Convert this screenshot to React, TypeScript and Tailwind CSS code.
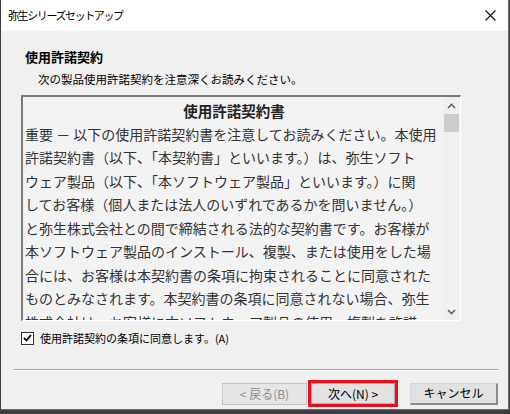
const jp = { fontFamily: '"Noto Sans CJK JP", "Noto Sans", sans-serif' }

const lines = [
  '重要 － 以下の使用許諾契約書を注意してお読みください。本使用',
  '許諾契約書（以下、「本契約書」といいます。）は、弥生ソフト',
  'ウェア製品（以下、「本ソフトウェア製品」といいます。）に関',
  'してお客様（個人または法人のいずれであるかを問いません。）',
  'と弥生株式会社との間で締結される法的な契約書です。お客様が',
  '本ソフトウェア製品のインストール、複製、または使用をした場',
  '合には、お客様は本契約書の条項に拘束されることに同意された',
  'ものとみなされます。本契約書の条項に同意されない場合、弥生',
  '株式会社は、お客様に本ソフトウェア製品の使用、複製を許諾',
]

function Chevron({ down }: { down?: boolean }) {
  return (
    <svg width="9" height="6" viewBox="0 0 9 6" className="block">
      <path
        d={down ? 'M1 1 L4.5 4.5 L8 1' : 'M1 5 L4.5 1.5 L8 5'}
        fill="none"
        stroke="#606060"
        strokeWidth="1.6"
      />
    </svg>
  )
}

export default function App() {
  return (
    <div className="flex h-[414px] w-[510px] flex-col overflow-hidden bg-[#3c3c3c]" style={jp}>
      <div className="ml-px mr-[1px] flex h-[410px] flex-col border-r border-b border-[#6e6e6e] bg-[#f0f0f0]">
        {/* title bar */}
        <div className="flex h-[31px] shrink-0 items-center justify-between bg-white pl-[7px] pr-[12px]">
          <span className="text-[11px] tracking-[-1.4px] text-black">弥生シリーズセットアップ</span>
          <svg width="11" height="11" viewBox="0 0 11 11">
            <path d="M0.5 0.5 L10.5 10.5 M10.5 0.5 L0.5 10.5" stroke="#111" strokeWidth="1.1" />
          </svg>
        </div>

        <div className="flex flex-1 flex-col">
          <div className="pl-[24px] pt-[17px] text-[13px] font-bold leading-[18px] text-black">使用許諾契約</div>
          <div className="pl-[37px] pt-[4px] text-[11.5px] leading-[18px] text-black">
            次の製品使用許諾契約を注意深くお読みください。
          </div>

          {/* license text box */}
          <div className="ml-[20px] mt-[7px] flex h-[226px] w-[440px] border-t-2 border-l-2 border-t-[#7a7a7a] border-l-[#7a7a7a] border-r border-b border-r-white border-b-white bg-[#f3f3f3]">
            <div className="flex-1 overflow-hidden pl-[2px] pt-[2px] text-[14px] leading-[23.5px] text-[#333]">
              <div className="text-center text-[14.5px] font-bold text-[#222]">使用許諾契約書</div>
              {lines.map((l, i) => (
                <div key={i} className="whitespace-nowrap">
                  {l}
                </div>
              ))}
            </div>
            <div className="flex w-[17px] shrink-0 flex-col items-center bg-[#f0f0f0]">
              <div className="flex h-[17px] items-center justify-center">
                <Chevron />
              </div>
              <div className="h-[18px] w-[15px] bg-[#cdcdcd]" />
              <div className="flex-1" />
              <div className="flex h-[17px] items-center justify-center">
                <Chevron down />
              </div>
            </div>
          </div>

          {/* checkbox */}
          <div className="mt-[9px] flex h-[16px] items-center pl-[20px]">
            <div className="flex h-[13px] w-[13px] items-center justify-center border border-[#333] bg-white">
              <svg width="9" height="8" viewBox="0 0 9 8">
                <path d="M1 4 L3.5 6.5 L8 1" fill="none" stroke="#000" strokeWidth="1.8" />
              </svg>
            </div>
            <span className="ml-[6px] text-[11px] leading-[16px] text-black">使用許諾契約の条項に同意します。(A)</span>
          </div>

          {/* separator */}
          <div className="ml-[13px] mr-[10px] mt-[23px] border-t border-b border-t-[#a0a0a0] border-b-white" />

          {/* buttons */}
          <div className="mt-[9px] flex items-center">
            <button className="ml-[221px] h-[22px] w-[85px] border border-[#c4c4c4] bg-[#e6e6e6] text-[12px] text-[#8d8d8d]">
              &lt; 戻る(B)
            </button>
            <div className="ml-[1px] border-[3px] border-[#e8101c]">
              <button className="block h-[21px] w-[84px] border border-[#adadad] bg-[#e1e1e1] text-[12px] text-black">
                次へ(N) &gt;
              </button>
            </div>
            <button className="ml-[12px] h-[22px] w-[88px] border border-t-[#d8d8d8] border-l-[#d8d8d8] border-r-2 border-b-2 border-r-[#8a8a8a] border-b-[#8a8a8a] bg-[#e1e1e1] text-[12px] text-black">
              キャンセル
            </button>
          </div>
        </div>
      </div>
    </div>
  )
}
